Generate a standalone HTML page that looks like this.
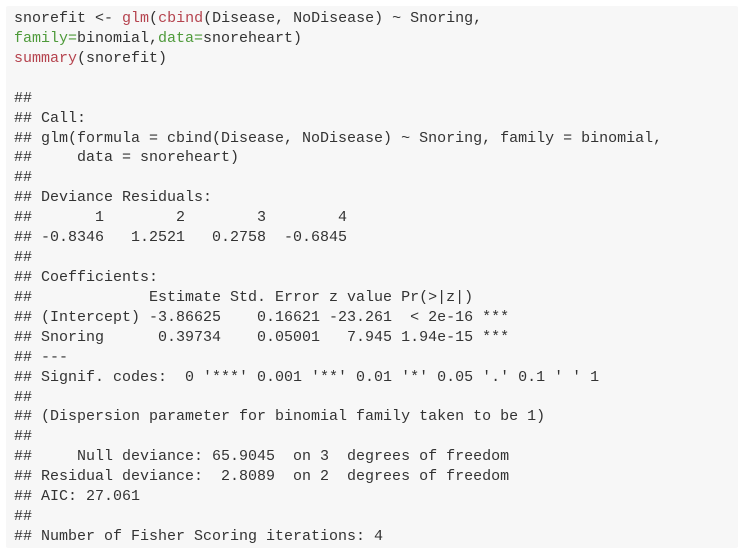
<!DOCTYPE html>
<html><head><meta charset="utf-8"><style>
body{margin:0;background:#fff;width:745px;height:551px;overflow:hidden}
.box{position:absolute;left:6px;top:6px;width:732px;height:542px;background:#f7f7f7;border-radius:2px}
pre{position:absolute;left:14px;top:9px;margin:0;font-family:"Liberation Mono",monospace;font-size:15px;line-height:19.92px;color:#333;white-space:pre}
.r{color:#c7254e;color:#b5434e}.g{color:#4e9a3a}
</style></head><body><div class="box"></div>
<pre>snorefit &lt;- <span class="r">glm</span>(<span class="r">cbind</span>(Disease, NoDisease) ~ Snoring,
<span class="g">family=</span>binomial,<span class="g">data=</span>snoreheart)
<span class="r">summary</span>(snorefit)

##
## Call:
## glm(formula = cbind(Disease, NoDisease) ~ Snoring, family = binomial,
##     data = snoreheart)
##
## Deviance Residuals:
##       1        2        3        4
## -0.8346   1.2521   0.2758  -0.6845
##
## Coefficients:
##             Estimate Std. Error z value Pr(&gt;|z|)
## (Intercept) -3.86625    0.16621 -23.261  &lt; 2e-16 ***
## Snoring      0.39734    0.05001   7.945 1.94e-15 ***
## ---
## Signif. codes:  0 '***' 0.001 '**' 0.01 '*' 0.05 '.' 0.1 ' ' 1
##
## (Dispersion parameter for binomial family taken to be 1)
##
##     Null deviance: 65.9045  on 3  degrees of freedom
## Residual deviance:  2.8089  on 2  degrees of freedom
## AIC: 27.061
##
## Number of Fisher Scoring iterations: 4</pre>
</body></html>
